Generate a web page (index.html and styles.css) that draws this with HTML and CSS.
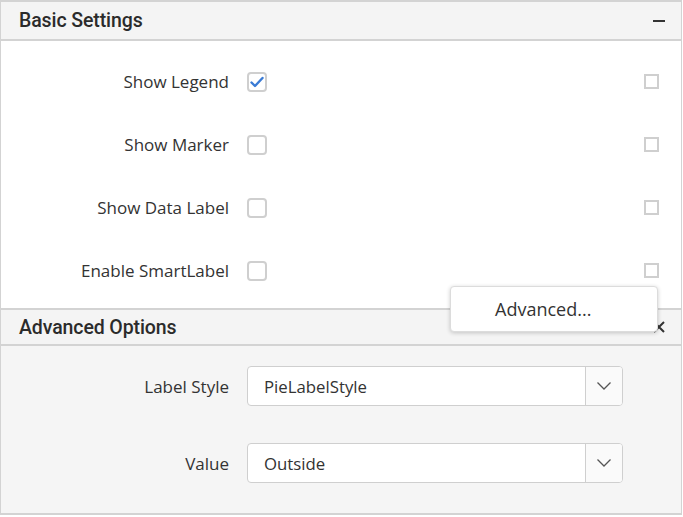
FILE: index.html
```html
<!DOCTYPE html>
<html>
<head>
<meta charset="utf-8">
<link rel="stylesheet" href="styles.css">
</head>
<body>
<div class="panel">
  <section class="section">
    <div class="header">
      <span class="title">Basic Settings</span>
      <span class="icon-minus"></span>
    </div>
    <div class="body basic">
      <div class="row">
        <span class="label">Show Legend</span>
        <span class="check checked"><svg width="14" height="12" viewBox="0 0 14 12"><path d="M1.5 6.5 L5 10 L12.5 2" fill="none" stroke="#3a7bd5" stroke-width="2.4" stroke-linecap="round" stroke-linejoin="round"/></svg></span>
        <span class="spacer"></span>
        <span class="small-check"></span>
      </div>
      <div class="row">
        <span class="label">Show Marker</span>
        <span class="check"></span>
        <span class="spacer"></span>
        <span class="small-check"></span>
      </div>
      <div class="row">
        <span class="label">Show Data Label</span>
        <span class="check"></span>
        <span class="spacer"></span>
        <span class="small-check"></span>
      </div>
      <div class="row">
        <span class="label">Enable SmartLabel</span>
        <span class="check"></span>
        <span class="spacer"></span>
        <span class="small-check"></span>
      </div>
    </div>
  </section>
  <section class="section adv">
    <div class="header">
      <span class="title">Advanced Options</span>
      <svg class="icon-x" width="12" height="12" viewBox="0 0 12 12"><path d="M1 1 L11 11 M11 1 L1 11" stroke="#333" stroke-width="2"/></svg>
    </div>
    <div class="body advanced">
      <div class="row drow">
        <span class="label">Label Style</span>
        <div class="dropdown">
          <span class="dval">PieLabelStyle</span>
          <span class="darrow"><svg width="16" height="10" viewBox="0 0 16 10"><path d="M1.5 1.5 L8 8 L14.5 1.5" fill="none" stroke="#555" stroke-width="1.3"/></svg></span>
        </div>
      </div>
      <div class="row drow">
        <span class="label">Value</span>
        <div class="dropdown">
          <span class="dval">Outside</span>
          <span class="darrow"><svg width="16" height="10" viewBox="0 0 16 10"><path d="M1.5 1.5 L8 8 L14.5 1.5" fill="none" stroke="#555" stroke-width="1.3"/></svg></span>
        </div>
      </div>
    </div>
  </section>
  <div class="menu">Advanced...</div>
</div>
</body>
</html>
```
FILE: styles.css
```css
html, body {
  margin: 0;
  padding: 0;
  background: #ffffff;
}
.panel {
  position: relative;
  width: 680px;
  border-left: 1px solid #d3d3d3;
  border-right: 1px solid #d3d3d3;
  border-top: 2px solid #d3d3d3;
  border-bottom: 2px solid #d3d3d3;
  font-family: "Open Sans", "Noto Sans", sans-serif;
  color: #333;
}
.header {
  display: flex;
  align-items: center;
  justify-content: space-between;
  height: 37px;
  padding: 0 16px 0 18px;
  background: #f4f4f4;
  border-bottom: 2px solid #d3d3d3;
}
.adv .header {
  height: 34px;
  border-top: 2px solid #d3d3d3;
  border-bottom: 2px solid #d3d3d3;
}
.title {
  font-family: Roboto, "Liberation Sans", sans-serif;
  font-weight: 500;
  font-size: 19.5px;
  letter-spacing: -0.1px;
  color: #2b2b2b;
}
.icon-minus {
  width: 12px;
  height: 2px;
  background: #333;
}
.body.basic {
  background: #fff;
  padding: 9px 0 6px 0;
}
.body.advanced {
  background: #f5f5f5;
  padding: 20px 0 30px 0;
  display: flex;
  flex-direction: column;
  gap: 37px;
}
.row {
  display: flex;
  align-items: center;
  height: 63px;
}
.drow {
  height: 40px;
}
.label {
  width: 228px;
  text-align: right;
  font-size: 17px;
  color: #333;
  margin-right: 18px;
}
.check {
  width: 16px;
  height: 16px;
  border: 2px solid #cfcfcf;
  border-radius: 4px;
  display: flex;
  align-items: center;
  justify-content: center;
  background: #fff;
}
.spacer {
  flex: 1;
}
.small-check {
  width: 11px;
  height: 11px;
  border: 2px solid #cfcfcf;
  margin-right: 22px;
}
.dropdown {
  display: flex;
  width: 374px;
  height: 38px;
  border: 1.5px solid #cfcfcf;
  border-radius: 4px;
  background: #fff;
  overflow: hidden;
}
.dval {
  flex: 1;
  display: flex;
  align-items: center;
  padding-left: 16px;
  font-size: 16.8px;
  color: #333;
}
.darrow {
  width: 36px;
  display: flex;
  align-items: center;
  justify-content: center;
  border-left: 1.5px solid #cfcfcf;
  background: #fafafa;
}
.menu {
  position: absolute;
  left: 449px;
  top: 284px;
  width: 208px;
  height: 46px;
  background: #fff;
  border: 1px solid #dcdcdc;
  border-radius: 4px;
  box-shadow: 0 1px 4px rgba(0,0,0,0.2);
  display: flex;
  align-items: center;
  padding-left: 44px;
  padding-bottom: 1px;
  font-size: 18px;
  color: #333;
  box-sizing: border-box;
}
```
